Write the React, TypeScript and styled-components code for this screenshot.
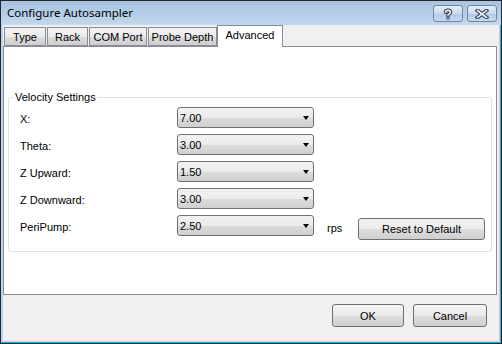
import * as React from 'react';
import styled, { createGlobalStyle } from 'styled-components';

const GlobalStyle = createGlobalStyle`
  html, body {
    margin: 0;
    padding: 0;
    background: #ffffff;
  }
  body {
    font-family: "Liberation Sans", Arial, sans-serif;
    font-size: 11px;
    color: #000;
  }
`;

const Window = styled.div`
  width: 502px;
  height: 344px;
  box-sizing: border-box;
  border: 1px solid #1e2630;
  background: #bed4eb;
  display: flex;
  flex-direction: column;
  box-shadow: inset 0 -1px 0 #3aa6dc, inset -1px 0 0 #3aa6dc;
`;

const TitleBar = styled.div`
  height: 24px;
  flex: none;
  display: flex;
  align-items: center;
  justify-content: space-between;
  padding: 0 4px 0 6px;
  background: linear-gradient(#a9c3df, #c1d7ed);
`;

const Title = styled.span`
  font-family: "Noto Sans", "Segoe UI", sans-serif;
  font-size: 11.5px;
  color: #000;
  margin-top: -1px;
`;

const CaptionButtons = styled.div`
  display: flex;
  gap: 4px;
  align-self: flex-start;
  margin-top: 4px;
`;

const CaptionButton = styled.div`
  width: 30px;
  height: 17px;
  box-sizing: border-box;
  border: 1px solid #6f87a6;
  border-radius: 3px;
  background: linear-gradient(#e6eef8 0%, #c9dbee 50%, #b3cae3 51%, #c5d9ee 100%);
  display: flex;
  align-items: center;
  justify-content: center;
`;

const Client = styled.div`
  flex: 1;
  margin: 0 2px 2px 2px;
  background: #f0f0f0;
  display: flex;
  flex-direction: column;
`;

const TabStrip = styled.div`
  height: 21px;
  flex: none;
  display: flex;
  align-items: flex-end;
  gap: 1px;
  padding-left: 1px;
  margin-right: 2px;
  position: relative;
  z-index: 1;
`;

const Tab = styled.div<{ $w: number; $active?: boolean }>`
  width: ${({ $w }) => $w}px;
  height: ${({ $active }) => ($active ? 22 : 19)}px;
  box-sizing: border-box;
  border: 1px solid #898c95;
  border-bottom: ${({ $active }) => ($active ? 'none' : '1px solid #898c95')};
  margin-bottom: ${({ $active }) => ($active ? -1 : 0)}px;
  margin-left: ${({ $active }) => ($active ? -1 : 0)}px;
  background: ${({ $active }) =>
    $active ? '#ffffff' : 'linear-gradient(#f3f3f3 0%, #ebebeb 50%, #dddddd 51%, #cfcfcf 100%)'};
  display: flex;
  justify-content: center;
  padding-top: 3px;
  white-space: nowrap;
`;

const Page = styled.div`
  height: 249px;
  flex: none;
  box-sizing: border-box;
  margin-right: 2px;
  border: 1px solid #898c95;
  background: #ffffff;
  padding: 50px 4px 0 4px;
`;

const GroupBox = styled.div`
  position: relative;
  height: 155px;
  box-sizing: border-box;
  border: 1px solid #dce3e8;
  border-radius: 3px;
  padding: 9px 0 0 11px;
`;

const GroupCaption = styled.span`
  position: absolute;
  top: -7px;
  left: 4px;
  padding: 0 2px;
  background: #ffffff;
  line-height: 13px;
`;

const SettingsGrid = styled.div`
  display: grid;
  grid-template-columns: 157px 137px 44px 127px;
  grid-template-rows: repeat(5, 21px);
  row-gap: 6px;
  align-items: center;
`;

const Label = styled.span`
  grid-column: 1;
  padding-top: 2px;
`;

const Combo = styled.div`
  grid-column: 2;
  height: 21px;
  box-sizing: border-box;
  border: 1px solid #707070;
  border-radius: 3px;
  background: linear-gradient(#f2f2f2 0%, #ebebeb 50%, #dddddd 51%, #cfcfcf 100%);
  display: flex;
  align-items: center;
  justify-content: space-between;
  padding: 0 4px 0 2px;
`;

const Arrow = styled.span`
  width: 0;
  height: 0;
  border-left: 3.5px solid transparent;
  border-right: 3.5px solid transparent;
  border-top: 4px solid #000;
`;

const Unit = styled.span`
  grid-column: 3;
  padding-left: 13px;
  padding-top: 4px;
`;

const Button = styled.button<{ $w: number }>`
  width: ${({ $w }) => $w}px;
  height: 23px;
  box-sizing: border-box;
  border: 1px solid #707070;
  border-radius: 3px;
  background: linear-gradient(#f2f2f2 0%, #ebebeb 50%, #dddddd 51%, #cfcfcf 100%);
  font-family: "Liberation Sans", Arial, sans-serif;
  font-size: 11px;
  color: #000;
  padding: 0;
`;

const ResetButton = styled(Button)`
  grid-column: 4;
  align-self: start;
  margin-top: 3px;
  height: 22px;
`;

const Footer = styled.div`
  flex: 1;
  display: flex;
  justify-content: flex-end;
  align-items: flex-start;
  gap: 9px;
  padding: 9px 12px 0 0;
`;

const HelpIcon = () => (
  <svg width="12" height="12" viewBox="0 0 12 12">
    <path d="M3.5 4.2 C3.5 1.8 8.5 1.8 8.5 4.2 C8.5 5.8 6 5.8 6 7.3" fill="none" stroke="#2f3f56" strokeWidth="3.6" strokeLinecap="round" />
    <path d="M3.5 4.2 C3.5 1.8 8.5 1.8 8.5 4.2 C8.5 5.8 6 5.8 6 7.3" fill="none" stroke="#eef3f9" strokeWidth="1.6" strokeLinecap="round" />
    <circle cx="6" cy="10" r="1.8" fill="#2f3f56" />
    <circle cx="6" cy="10" r="0.8" fill="#eef3f9" />
  </svg>
);

const CloseIcon = () => (
  <svg width="14" height="10" viewBox="0 0 14 10">
    <path d="M2.5 1.5 L11.5 8.5 M11.5 1.5 L2.5 8.5" stroke="#2f3f56" strokeWidth="3.8" strokeLinecap="square" />
    <path d="M2.5 1.5 L11.5 8.5 M11.5 1.5 L2.5 8.5" stroke="#eef3f9" strokeWidth="1.6" strokeLinecap="square" />
  </svg>
);

const tabs = [
  { name: 'Type', w: 42 },
  { name: 'Rack', w: 41 },
  { name: 'COM Port', w: 58 },
  { name: 'Probe Depth', w: 69 },
  { name: 'Advanced', w: 66, active: true },
];

const settings = [
  { label: 'X:', value: '7.00' },
  { label: 'Theta:', value: '3.00' },
  { label: 'Z Upward:', value: '1.50' },
  { label: 'Z Downward:', value: '3.00' },
  { label: 'PeriPump:', value: '2.50' },
];

export default function App() {
  return (
    <>
      <GlobalStyle />
      <Window>
        <TitleBar>
          <Title>Configure Autosampler</Title>
          <CaptionButtons>
            <CaptionButton>
              <HelpIcon />
            </CaptionButton>
            <CaptionButton>
              <CloseIcon />
            </CaptionButton>
          </CaptionButtons>
        </TitleBar>
        <Client>
          <TabStrip>
            {tabs.map((t) => (
              <Tab key={t.name} $w={t.w} $active={t.active}>
                {t.name}
              </Tab>
            ))}
          </TabStrip>
          <Page>
            <GroupBox>
              <GroupCaption>Velocity Settings</GroupCaption>
              <SettingsGrid>
                {settings.map((s, i) => (
                  <React.Fragment key={s.label}>
                    <Label style={{ gridRow: i + 1 }}>{s.label}</Label>
                    <Combo style={{ gridRow: i + 1 }}>
                      <span>{s.value}</span>
                      <Arrow />
                    </Combo>
                  </React.Fragment>
                ))}
                <Unit style={{ gridRow: 5 }}>rps</Unit>
                <ResetButton $w={127} style={{ gridRow: 5 }}>Reset to Default</ResetButton>
              </SettingsGrid>
            </GroupBox>
          </Page>
          <Footer>
            <Button $w={72}>OK</Button>
            <Button $w={74}>Cancel</Button>
          </Footer>
        </Client>
      </Window>
    </>
  );
}
